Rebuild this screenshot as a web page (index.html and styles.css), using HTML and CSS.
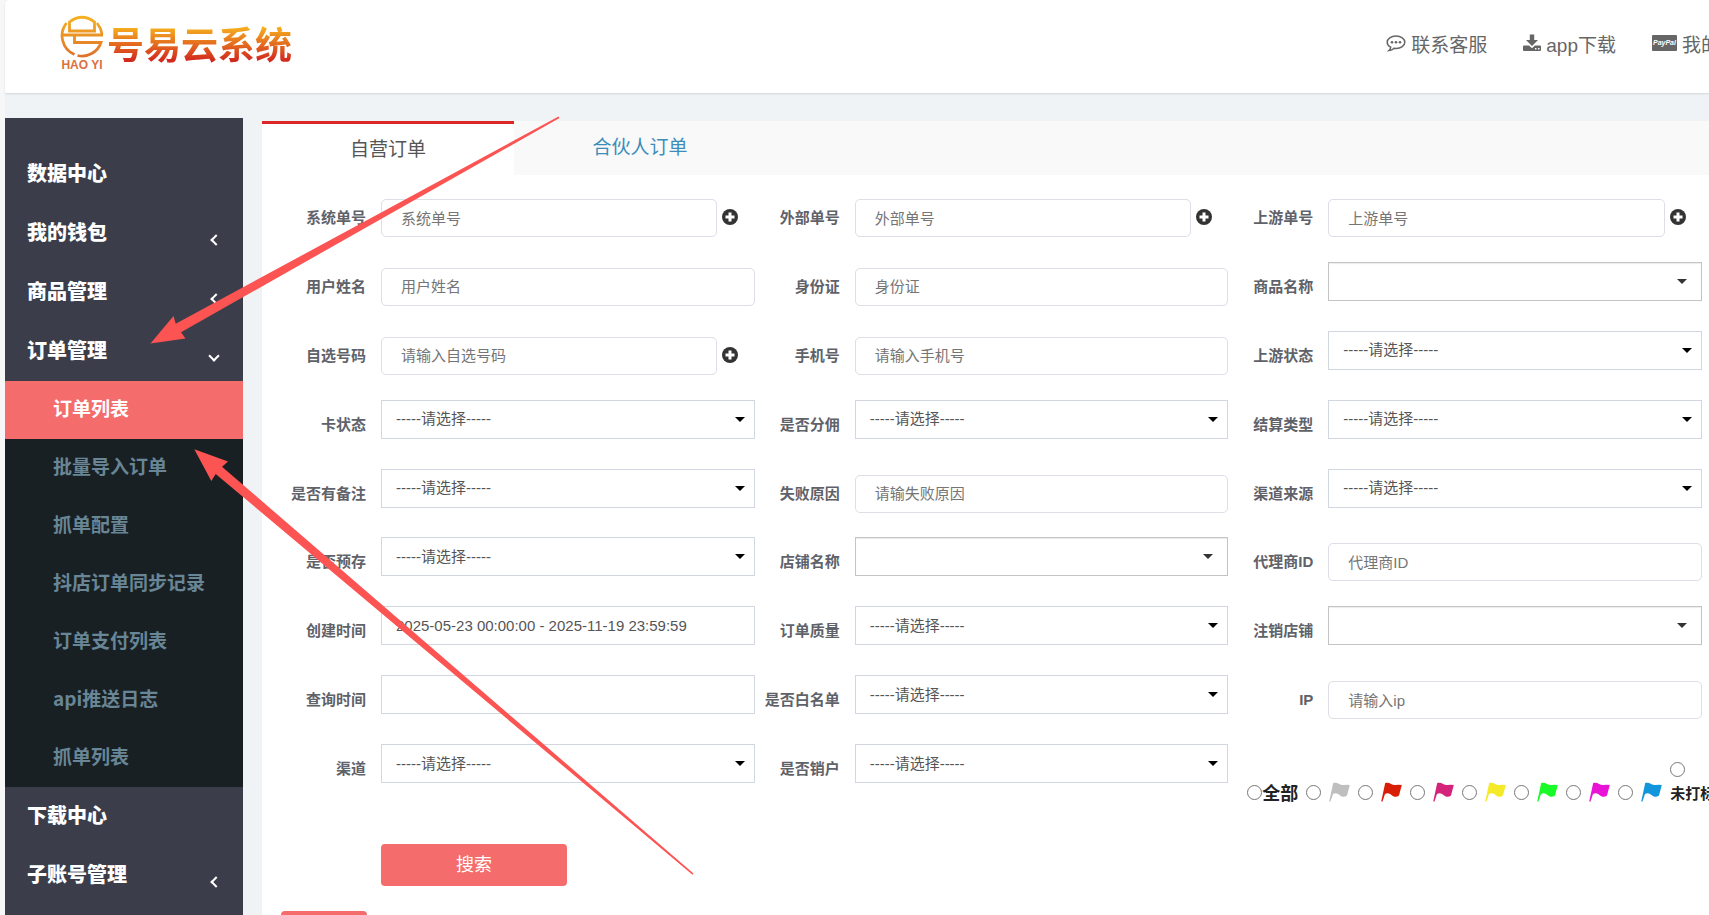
FILE: index.html
```html
<!DOCTYPE html>
<html lang="zh-CN">
    <head>
        <meta charset="utf-8">
        <title>号易云系统</title>
        <link rel="stylesheet" href="styles.css">
    </head>
    <body>
        <!-- Shared icons -->
        <svg class="symbols" width="0" height="0">
            <symbol id="plus" viewBox="0 0 16 16"><circle cx="8" cy="8" r="8" fill="#333"/><path d="M8 3.500V12.500M3.500 8H12.500" stroke="#fff" stroke-width="3"/></symbol>
            <symbol id="flag" viewBox="0 0 21 20"><path d="M4.200 1C8.500 -0.500 11 3.500 14.500 3Q17.500 2.500 20.800 3L18 13.500C15.500 15.500 12.500 15 10.500 13Q7.500 10 4 12L1.500 19.500H0.200Z"/></symbol>
        </svg>

        <header class="header">
            <a class="logo" href="#">
                <span class="logo-mark">
                    <svg width="44" height="44" viewBox="0 0 44 44" fill="none" stroke="url(#gold)" stroke-width="2.8">
                        <defs>
                            <linearGradient id="gold" gradientUnits="userSpaceOnUse" x1="0" y1="0" x2="0" y2="44">
                                <stop offset="0" stop-color="#f7b51e"/>
                                <stop offset="1" stop-color="#dd6f2c"/>
                            </linearGradient>
                        </defs>
                        <path d="M9.500 17V8Q22 -1.500 34.500 8V17Z"/>
                        <path d="M1 21H43"/>
                        <path d="M14.500 21V28.500H41A20 20 0 0 1 17.500 41.500"/>
                        <path d="M6.500 9A20.500 20.500 0 0 0 14.500 40.500"/>
                        <path d="M37 9Q41 14 42 20"/>
                    </svg>
                    <span class="logo-sub">HAO YI</span>
                </span>
                <span class="logo-text">号易云系统</span>
            </a>
            <nav class="top-nav">
                <a href="#">
                    <svg width="20" height="18" viewBox="0 0 20 18">
                        <path d="M10 2C5 2 1.200 4.700 1.200 8.200C1.200 10.300 2.600 12.100 4.700 13.200C4.600 14.600 4 15.700 3 16.500C5.200 16.300 6.900 15.500 8.100 14.200Q9 14.400 10 14.400C15 14.400 18.800 11.700 18.800 8.200C18.800 4.700 15 2 10 2Z" fill="none" stroke="#666" stroke-width="1.500"/>
                        <circle cx="6" cy="8.200" r="1.300" fill="#666"/>
                        <circle cx="10" cy="8.200" r="1.300" fill="#666"/>
                        <circle cx="14" cy="8.200" r="1.300" fill="#666"/>
                    </svg>
                    <span>联系客服</span>
                </a>
                <a href="#">
                    <svg width="18" height="18" viewBox="0 0 18 18" fill="#666">
                        <path d="M6.800 0.500H11.200V6H15L9 12L3 6H6.800Z"/>
                        <path fill-rule="evenodd" d="M1 11.500H6L9 14.300L12 11.500H17Q18 11.500 18 12.500V16Q18 17 17 17H1Q0 17 0 16V12.500Q0 11.500 1 11.500ZM12 14V15.500H13.500V14ZM15 14V15.500H16.500V14Z"/>
                    </svg>
                    <span>app下载</span>
                </a>
                <a href="#">
                    <span class="paypal">PayPal</span>
                    <span>我的</span>
                </a>
            </nav>
        </header>

        <div class="main">
            <aside class="sidebar">
                <ul class="menu">
                    <li><a href="#">数据中心</a></li>
                    <li><a href="#">我的钱包<i class="arrow"></i></a></li>
                    <li><a href="#">商品管理<i class="arrow"></i></a></li>
                    <li>
                        <a href="#">订单管理<i class="arrow open"></i></a>
                        <ul class="submenu">
                            <li><a class="active" href="#">订单列表</a></li>
                            <li><a href="#">批量导入订单</a></li>
                            <li><a href="#">抓单配置</a></li>
                            <li><a href="#">抖店订单同步记录</a></li>
                            <li><a href="#">订单支付列表</a></li>
                            <li><a href="#">api推送日志</a></li>
                            <li><a href="#">抓单列表</a></li>
                        </ul>
                    </li>
                    <li><a href="#">下载中心</a></li>
                    <li><a href="#">子账号管理<i class="arrow"></i></a></li>
                </ul>
            </aside>

            <section class="panel">
                <nav class="tabs">
                    <a class="tab active" href="#">自营订单</a>
                    <a class="tab" href="#">合伙人订单</a>
                </nav>

                <form class="search-form">
                    <div class="fields">
                        <!-- row 1 -->
                        <div class="field">
                            <label for="sys-no">系统单号</label>
                            <div class="control with-add">
                                <input class="text" id="sys-no" type="text" placeholder="系统单号">
                                <button class="add" type="button"><svg width="16" height="16"><use href="#plus"/></svg></button>
                            </div>
                        </div>
                        <div class="field">
                            <label for="out-no">外部单号</label>
                            <div class="control with-add">
                                <input class="text" id="out-no" type="text" placeholder="外部单号">
                                <button class="add" type="button"><svg width="16" height="16"><use href="#plus"/></svg></button>
                            </div>
                        </div>
                        <div class="field">
                            <label for="up-no">上游单号</label>
                            <div class="control with-add">
                                <input class="text" id="up-no" type="text" placeholder="上游单号">
                                <button class="add" type="button"><svg width="16" height="16"><use href="#plus"/></svg></button>
                            </div>
                        </div>

                        <!-- row 2 -->
                        <div class="field">
                            <label for="user-name">用户姓名</label>
                            <div class="control"><input class="text" id="user-name" type="text" placeholder="用户姓名"></div>
                        </div>
                        <div class="field">
                            <label for="id-card">身份证</label>
                            <div class="control"><input class="text" id="id-card" type="text" placeholder="身份证"></div>
                        </div>
                        <div class="field">
                            <label for="goods">商品名称</label>
                            <div class="control picker"><select id="goods"><option></option></select></div>
                        </div>

                        <!-- row 3 -->
                        <div class="field">
                            <label for="pick-no">自选号码</label>
                            <div class="control with-add">
                                <input class="text" id="pick-no" type="text" placeholder="请输入自选号码">
                                <button class="add" type="button"><svg width="16" height="16"><use href="#plus"/></svg></button>
                            </div>
                        </div>
                        <div class="field">
                            <label for="phone">手机号</label>
                            <div class="control"><input class="text" id="phone" type="text" placeholder="请输入手机号"></div>
                        </div>
                        <div class="field">
                            <label for="up-status">上游状态</label>
                            <div class="control drop"><select id="up-status"><option>-----请选择-----</option></select></div>
                        </div>

                        <!-- row 4 -->
                        <div class="field">
                            <label for="card-status">卡状态</label>
                            <div class="control drop"><select id="card-status"><option>-----请选择-----</option></select></div>
                        </div>
                        <div class="field">
                            <label for="commission">是否分佣</label>
                            <div class="control drop"><select id="commission"><option>-----请选择-----</option></select></div>
                        </div>
                        <div class="field">
                            <label for="settle">结算类型</label>
                            <div class="control drop"><select id="settle"><option>-----请选择-----</option></select></div>
                        </div>

                        <!-- row 5 -->
                        <div class="field">
                            <label for="has-note">是否有备注</label>
                            <div class="control drop"><select id="has-note"><option>-----请选择-----</option></select></div>
                        </div>
                        <div class="field">
                            <label for="fail">失败原因</label>
                            <div class="control"><input class="text" id="fail" type="text" placeholder="请输失败原因"></div>
                        </div>
                        <div class="field">
                            <label for="source">渠道来源</label>
                            <div class="control drop"><select id="source"><option>-----请选择-----</option></select></div>
                        </div>

                        <!-- row 6 -->
                        <div class="field">
                            <label for="prepaid">是否预存</label>
                            <div class="control drop"><select id="prepaid"><option>-----请选择-----</option></select></div>
                        </div>
                        <div class="field">
                            <label for="shop">店铺名称</label>
                            <div class="control picker"><select id="shop"><option></option></select></div>
                        </div>
                        <div class="field">
                            <label for="agent">代理商ID</label>
                            <div class="control"><input class="text" id="agent" type="text" placeholder="代理商ID"></div>
                        </div>

                        <!-- row 7 -->
                        <div class="field">
                            <label for="created">创建时间</label>
                            <div class="control"><input class="date" id="created" type="text" value="2025-05-23 00:00:00 - 2025-11-19 23:59:59"></div>
                        </div>
                        <div class="field">
                            <label for="quality">订单质量</label>
                            <div class="control drop"><select id="quality"><option>-----请选择-----</option></select></div>
                        </div>
                        <div class="field">
                            <label for="closed-shop">注销店铺</label>
                            <div class="control picker"><select id="closed-shop"><option></option></select></div>
                        </div>

                        <!-- row 8 -->
                        <div class="field">
                            <label for="queried">查询时间</label>
                            <div class="control"><input class="date" id="queried" type="text"></div>
                        </div>
                        <div class="field">
                            <label for="white">是否白名单</label>
                            <div class="control drop"><select id="white"><option>-----请选择-----</option></select></div>
                        </div>
                        <div class="field">
                            <label for="ip">IP</label>
                            <div class="control"><input class="text" id="ip" type="text" placeholder="请输入ip"></div>
                        </div>

                        <!-- row 9 -->
                        <div class="field">
                            <label for="channel">渠道</label>
                            <div class="control drop"><select id="channel"><option>-----请选择-----</option></select></div>
                        </div>
                        <div class="field">
                            <label for="cancelled">是否销户</label>
                            <div class="control drop"><select id="cancelled"><option>-----请选择-----</option></select></div>
                        </div>
                        <div class="flags">
                            <label class="flag-all"><input type="radio" name="flag">全部</label>
                            <label class="flag gray"><input type="radio" name="flag"><svg width="21" height="20"><use href="#flag"/></svg></label>
                            <label class="flag red"><input type="radio" name="flag"><svg width="21" height="20"><use href="#flag"/></svg></label>
                            <label class="flag rose"><input type="radio" name="flag"><svg width="21" height="20"><use href="#flag"/></svg></label>
                            <label class="flag yellow"><input type="radio" name="flag"><svg width="21" height="20"><use href="#flag"/></svg></label>
                            <label class="flag green"><input type="radio" name="flag"><svg width="21" height="20"><use href="#flag"/></svg></label>
                            <label class="flag magenta"><input type="radio" name="flag"><svg width="21" height="20"><use href="#flag"/></svg></label>
                            <label class="flag blue"><input type="radio" name="flag"><svg width="21" height="20"><use href="#flag"/></svg></label>
                            <label class="flag-none"><input type="radio" name="flag">未打标</label>
                        </div>
                    </div>
                    <button class="search" type="submit">搜索</button>
                </form>
                <button class="action" type="button"></button>
            </section>
        </div>

        <!-- Arrows pointing at the menu entries -->
        <svg class="pointers" width="700" height="880" viewBox="0 0 700 880" fill="#fc5353">
            <path d="M150.500 343.500L173.500 316L175.700 323.700L558.500 116.500L559.500 118L181 332.300L185.500 338.500Z"/>
            <path d="M194.300 449.300L228 461.500L222 466.700L693.500 873.500L692.500 874.700L215.700 474L211.300 481Z"/>
        </svg>
    </body>
</html>
```
FILE: styles.css
```css
* {
    box-sizing: border-box;
}

body {
    margin: 0;
    padding-left: 5px;
    height: 100vh;
    overflow: hidden;
    display: flex;
    flex-direction: column;
    background: linear-gradient(to right, #f7f7f7 5px, #eff3f6 5px);
    color: #333;
    font-family: "Liberation Sans", "Noto Sans CJK SC", sans-serif;
    font-size: 15px;
}

a {
    text-decoration: none;
}

ul {
    margin: 0;
    padding: 0;
    list-style: none;
}

input, select, button {
    font: inherit;
}

.symbols {
    position: absolute;
}

/* Header */
.header {
    flex: none;
    height: 93px;
    display: flex;
    justify-content: space-between;
    padding-left: 54px;
    background: #fff;
    border-top-left-radius: 4px;
    box-shadow: 0 1px 2px rgba(0, 0, 0, 0.12);
}

.logo {
    display: flex;
    padding-top: 14px;
    gap: 2px;
}

.logo-mark {
    display: flex;
    flex-direction: column;
    align-items: center;
    width: 46px;
}

.logo-mark svg {
    flex: none;
}

.logo-sub {
    font-size: 12px;
    font-weight: bold;
    line-height: 14px;
    white-space: nowrap;
    color: #dc7040;
}

.logo-text {
    height: 60px;
    font-family: "Noto Sans CJK SC", sans-serif;
    font-size: 37px;
    font-weight: bold;
    line-height: 58px;
    color: transparent;
    background: linear-gradient(#f7b51e 20%, #d2281f 78%);
    -webkit-background-clip: text;
    background-clip: text;
}

.top-nav {
    display: flex;
    align-items: center;
    gap: 36px;
    height: 86px;
    margin-right: -11px;
}

.top-nav a {
    display: flex;
    align-items: center;
    gap: 5px;
    color: #666;
    font-size: 19px;
    white-space: nowrap;
}

.paypal {
    width: 25px;
    height: 16px;
    border-radius: 1px;
    background: #666;
    color: #fff;
    font-size: 7px;
    font-style: italic;
    font-weight: bold;
    line-height: 16px;
    text-align: center;
}

/* Layout */
.main {
    flex: 1;
    display: flex;
    min-height: 0;
    padding-top: 25px;
}

/* Sidebar */
.sidebar {
    flex: none;
    width: 238px;
    padding-top: 27px;
    overflow: hidden;
    background: #3b3e4a;
    font-family: "Noto Sans CJK SC", sans-serif;
    font-weight: 900;
}

.menu a {
    display: flex;
    align-items: center;
    justify-content: space-between;
    height: 59px;
    padding: 0 23px 4px 22px;
    color: #fff;
    font-size: 20px;
}

.submenu {
    background: #192024;
}

.menu .submenu a {
    height: 58px;
    padding-left: 48px;
    padding-bottom: 6px;
    color: #688696;
    font-size: 19px;
    font-weight: bold;
}

.menu .submenu .active {
    background: #f56c6c;
    color: #fff;
}

.arrow {
    width: 8px;
    height: 8px;
    margin-top: 16px;
    border-left: 2px solid #fff;
    border-bottom: 2px solid #fff;
    transform: rotate(45deg);
}

.arrow.open {
    margin-top: 12px;
    margin-right: 2px;
    transform: rotate(-45deg);
}

/* Panel */
.panel {
    flex: 1;
    min-width: 0;
    margin: 3px 0 0 19px;
    overflow: hidden;
    background: #fff;
}

.tabs {
    display: flex;
    height: 54px;
    background: #f9f9f9;
}

.tab {
    width: 252px;
    padding-top: 3px;
    color: #3c8dbc;
    font-size: 19px;
    line-height: 48px;
    text-align: center;
}

.tab.active {
    padding-top: 0;
    border-top: 3px solid #dd2727;
    background: #fff;
    color: #555;
    line-height: 52px;
}

/* Search form */
.search-form {
    padding: 18px 7px 0 19px;
}

.fields {
    display: grid;
    grid-template-columns: repeat(3, minmax(0, 1fr));
    grid-template-rows: repeat(9, 1fr);
    height: 620px;
}

.field {
    display: flex;
    align-items: flex-start;
    min-width: 0;
}

.field label {
    flex: none;
    width: 100px;
    margin-top: 6px;
    padding-right: 15px;
    color: #5f6269;
    font-weight: bold;
    line-height: 37px;
    text-align: right;
}

.control {
    flex: 1;
    display: flex;
    min-width: 0;
    position: relative;
}

.control input, .control select {
    width: 100%;
    height: 39px;
    margin: 0;
    padding: 0 14px 1px;
    border: 1px solid #d2d6e0;
    border-radius: 0;
    background: #fff;
    color: #555;
}

.control .text {
    height: 38px;
    margin-top: 6px;
    padding: 0 19px;
    border-color: #dcdee8;
    border-radius: 5px;
}

.control select {
    appearance: none;
}

.with-add {
    align-items: center;
    gap: 5px;
}

.with-add .text {
    width: 90%;
}

.add {
    margin-top: 4px;
    padding: 0;
    border: 0;
    background: none;
    line-height: 0;
}

/* Caret drawn over the select box */
.drop::after, .picker::after {
    content: "";
    position: absolute;
    top: 17px;
    right: 10px;
    border: 5px solid transparent;
    border-top-color: #000;
    border-bottom: 0;
    pointer-events: none;
}

.picker::after {
    right: 15px;
    border-top-color: #333;
}

.picker select {
    border-color: #c4c4c4;
    box-shadow: inset 0 1px 1px rgba(0, 0, 0, 0.08);
}

/* Flag filter */
.flags {
    display: flex;
    align-items: flex-end;
    gap: 8px;
    height: 61px;
    padding-left: 19px;
    color: #222;
    font-weight: bold;
}

.flags input {
    width: 15px;
    height: 15px;
    margin: 0;
}

.flag-all, .flag {
    display: flex;
    align-items: center;
    height: 26px;
}

.flag-all {
    font-size: 18px;
    white-space: nowrap;
}

.flag {
    gap: 8px;
}

.flag-none {
    display: flex;
    flex-direction: column;
    gap: 6px;
    line-height: 22px;
    white-space: nowrap;
}

.gray { fill: #bfbfbf; }
.red { fill: #d81e06; }
.rose { fill: #d4237a; }
.yellow { fill: #f4ea2a; }
.green { fill: #1afa29; }
.magenta { fill: #e813d5; }
.blue { fill: #1296db; }

.search {
    display: block;
    width: 186px;
    height: 42px;
    margin: 31px 0 0 100px;
    padding-bottom: 5px;
    border: 0;
    border-radius: 4px;
    background: #f56c6c;
    color: #fff;
    font-size: 18px;
}

.action {
    display: block;
    width: 86px;
    height: 38px;
    margin: 25px 0 0 19px;
    border: 0;
    border-radius: 4px;
    background: #f56c6c;
}

.pointers {
    position: absolute;
    top: 0;
    left: 0;
    pointer-events: none;
}
```
